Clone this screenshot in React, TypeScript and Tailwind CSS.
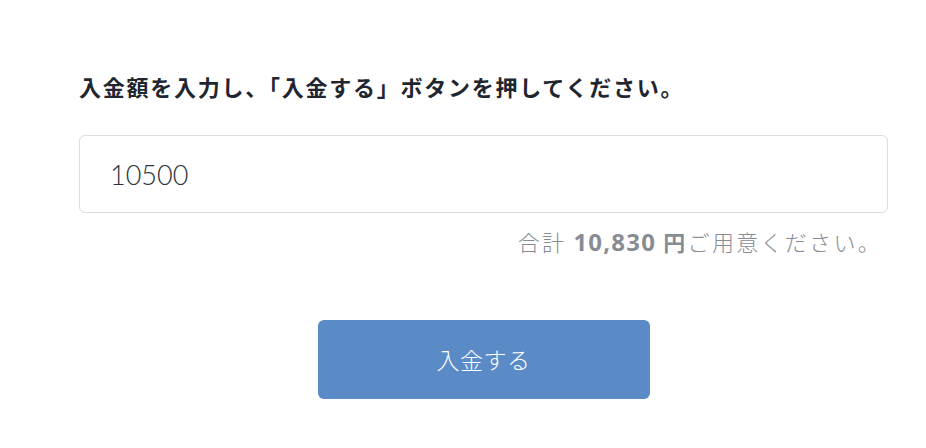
import React, { useState } from "react";

const App = () => {
  const [amount, setAmount] = useState("10500");

  const total = "10,830";

  return (
    <div className="w-[926px] h-[448px] bg-white font-['Noto_Sans_CJK_JP','Noto_Sans',sans-serif]">
      <div className="flex flex-col w-[809px] ml-[79px] pt-[70px]">
        <h2 className="text-[22px] leading-[32px] font-bold text-[#1f2630] tracking-[1.75px] whitespace-nowrap">
          入金額を入力し、「入金する」ボタンを押してください。
        </h2>

        <input
          value={amount}
          onChange={(e) => setAmount(e.target.value)}
          className="mt-[33px] w-[809px] h-[78px] rounded-[6px] border border-[#dcdde0] px-[30px] text-[27px] font-light text-[#2b3340] font-['Lato','Noto_Sans_CJK_JP',sans-serif] outline-none"
        />

        <p className="mt-[12px] mr-[6px] text-right text-[22px] leading-[32px] font-light text-[#878c94] tracking-[2.3px] whitespace-nowrap">
          合計{" "}
          <span className="font-bold text-[24px] tracking-[1.2px] font-['Noto_Sans','Noto_Sans_CJK_JP',sans-serif]">{total}</span>{" "}
          <span className="font-bold">円</span>ご用意ください。
        </p>

        <div className="flex justify-center mt-[62px]">
          <button className="w-[332px] h-[79px] rounded-[6px] bg-[#5a8bc7] text-white text-[23px] font-light tracking-[0.5px]">
            入金する
          </button>
        </div>
      </div>
    </div>
  );
};

export default App;
